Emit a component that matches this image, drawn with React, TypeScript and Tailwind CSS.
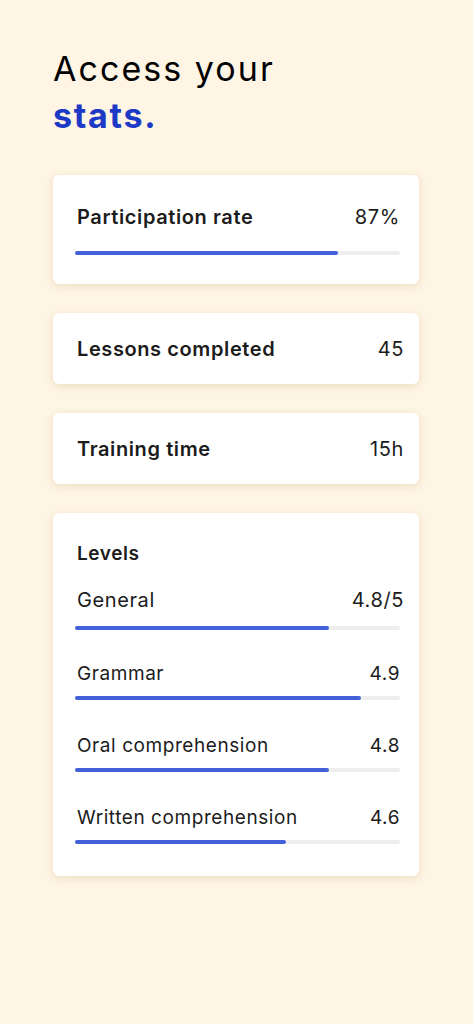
import React from "react";

const font = { fontFamily: "Inter, 'Open Sans', sans-serif" };

const Bar = ({ pct }: { pct: number }) => (
  <div className="h-[4px] w-full rounded-full bg-[#eeeeee]">
    <div className="h-full rounded-full bg-[#4361d8]" style={{ width: `${pct}%` }} />
  </div>
);

const levels = [
  { name: "Grammar", value: "4.9", pct: 88 },
  { name: "Oral comprehension", value: "4.8", pct: 78 },
  { name: "Written comprehension", value: "4.6", pct: 65 },
];

export default function App() {
  return (
    <div className="min-h-[1024px] w-full bg-[#fef5e4] px-[53px] pt-[45px] text-[#1c1c1c]" style={font}>
      <h1 className="text-[34px] leading-[47px] tracking-[0.06em] text-black">
        Access your
        <br />
        <span className="font-bold tracking-[0.05em] text-[#1d3ac7]">stats.</span>
      </h1>

      <div className="mt-[36px] flex w-[366px] flex-col gap-[29px]">
        <div className="rounded-[6px] bg-white pl-[22px] pr-[19px] pt-[27px] pb-[29px] shadow-[0_2px_8px_rgba(150,110,40,0.18)]">
          <div className="flex items-center justify-between pl-[2px] text-[20px] leading-[30px] tracking-[0.03em]">
            <span className="font-semibold">Participation rate</span>
            <span>87%</span>
          </div>
          <div className="mt-[19px]">
            <Bar pct={81} />
          </div>
        </div>

        <div className="flex h-[71px] items-center justify-between rounded-[6px] bg-white pl-[24px] pr-[15px] text-[20px] tracking-[0.03em] shadow-[0_2px_8px_rgba(150,110,40,0.18)]">
          <span className="font-semibold">Lessons completed</span>
          <span>45</span>
        </div>

        <div className="flex h-[71px] items-center justify-between rounded-[6px] bg-white pl-[24px] pr-[15px] text-[20px] tracking-[0.03em] shadow-[0_2px_8px_rgba(150,110,40,0.18)]">
          <span className="font-semibold">Training time</span>
          <span>15h</span>
        </div>

        <div className="rounded-[6px] bg-white pl-[22px] pr-[19px] pt-[27px] pb-[32px] shadow-[0_2px_8px_rgba(150,110,40,0.18)]">
          <div className="pl-[2px] text-[19px] font-semibold leading-[28px] tracking-[0.03em]">Levels</div>
          <div className="mt-[17px] flex items-center justify-between pl-[2px] text-[20px] leading-[30px] tracking-[0.03em]">
            <span>General</span>
            <span className="-mr-[4px]">4.8/5</span>
          </div>
          <div className="mt-[11px]">
            <Bar pct={78} />
          </div>
          {levels.map((l, i) => (
            <div key={l.name} className={i === 0 ? "mt-[31px]" : "mt-[33px]"}>
              <div className="flex items-center justify-between pl-[2px] text-[19px] leading-[26px] tracking-[0.03em]">
                <span>{l.name}</span>
                <span>{l.value}</span>
              </div>
              <div className="mt-[9px]">
                <Bar pct={l.pct} />
              </div>
            </div>
          ))}
        </div>
      </div>
    </div>
  );
}
